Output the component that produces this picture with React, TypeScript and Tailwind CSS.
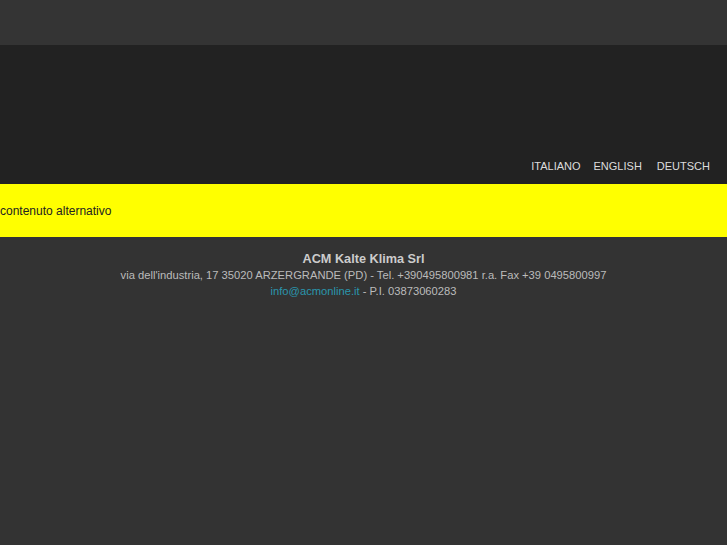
export default function App() {
  return (
    <div className="min-h-[545px] bg-[#333333] font-['Liberation_Sans',Arial,sans-serif]">
      <div className="h-[45px] bg-[#343434]" />
      <div className="h-[139px] bg-[#222222] flex items-end justify-end pb-[11px] pr-[17px]">
        <div className="flex text-[11px] leading-[13px] text-[#dddddd]">
          <span>ITALIANO</span>
          <span className="ml-[13px]">ENGLISH</span>
          <span className="ml-[15px]">DEUTSCH</span>
        </div>
      </div>
      <div className="h-[53px] bg-[#ffff00] flex items-center text-[12px] text-[#222222]">
        contenuto alternativo
      </div>
      <div className="pt-[14px] text-center text-[11.2px] leading-[16px] text-[#bbbbbb]">
        <div className="text-[12.7px] font-bold text-[#cccccc]">ACM Kalte Klima Srl</div>
        <div>via dell'industria, 17 35020 ARZERGRANDE (PD) - Tel. +390495800981 r.a. Fax +39 0495800997</div>
        <div>
          <a className="text-[#2a96ad]">info@acmonline.it</a> - P.I. 03873060283
        </div>
      </div>
    </div>
  );
}
